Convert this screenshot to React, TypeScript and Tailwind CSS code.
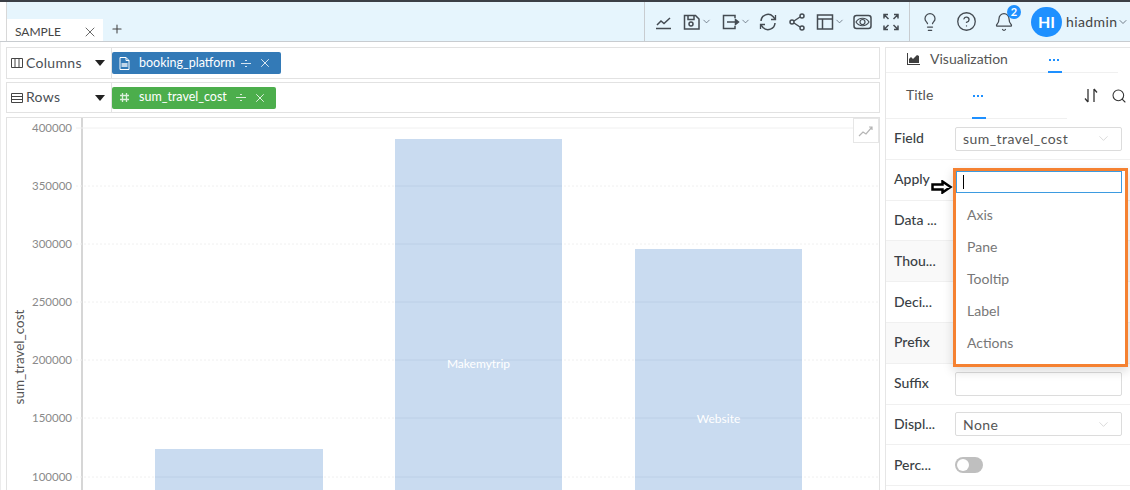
import React from "react";
import { ChevronDown, X, Plus, Search, Lightbulb, CircleHelp, Bell } from "lucide-react";

const F = "[font-family:Lato,'Open_Sans',sans-serif]";

const Chev = ({ c = "#4b5563", s = 11, cn = "" }: { c?: string; s?: number; cn?: string }) => (
  <ChevronDown size={s} color={c} strokeWidth={1.5} className={cn} />
);

const Tool = ({ children, w = 18, cn = "" }: { children: React.ReactNode; w?: number; cn?: string }) => (
  <svg width={w} height="18" viewBox={`0 0 ${w} 18`} fill="none" stroke="#444b52" strokeWidth="1.5" className={cn}>
    {children}
  </svg>
);

function Toolbar() {
  return (
    <div className="ml-auto flex h-full items-center">
      <div className="flex h-full items-center border-l border-[#c8ccd0] pl-[10px] pr-[10px]">
        <Tool>
          <path d="M1 15.500h15M2 12l4-4 3 2.500L15 5" />
        </Tool>
        <Tool cn="ml-[10px]">
          <path d="M1.500 2.500h11l3.500 3.500v10H1.500zM5 2.500v4h6v-4" />
          <circle cx="8" cy="11" r="2" />
        </Tool>
        <Chev />
        <Tool w={19} cn="ml-[10px]">
          <path d="M13 5V2.500H1.500v13H13V13M5 9h10" />
          <path d="M13.500 6.500l3 2.500-3 2.500z" fill="#444b52" />
        </Tool>
        <Chev cn="-ml-[1px]" />
        <Tool cn="ml-[8px]">
          <path d="M2 8a7 7 0 0 1 12-4.500L16 6M16 10a7 7 0 0 1-12 4.500L2 12" />
          <path d="M16.500 2v4.500H12M1.500 16v-4.500H6" strokeWidth="1.300" />
        </Tool>
        <Tool w={16} cn="ml-[12px]">
          <circle cx="3" cy="9" r="2" />
          <circle cx="13" cy="3" r="2" />
          <circle cx="13" cy="15" r="2" />
          <path d="M5 8l6-4M5 10l6 4" />
        </Tool>
        <Tool cn="ml-[11px]">
          <path d="M1.500 2h15v14h-15zM1.500 6h15M6.500 6v10" />
        </Tool>
        <Chev />
        <svg width="19" height="18" viewBox="0 0 19 18" fill="none" stroke="#444b52" strokeWidth="1.200" className="ml-[8px]">
          <rect x="1" y="2.500" width="17" height="13" rx="2.500" strokeWidth="1.500" />
          <path d="M3 9c3-5 10-5 13 0-3 5-10 5-13 0z" />
          <circle cx="9.500" cy="9" r="2.500" />
        </svg>
        <Tool w={16} cn="ml-[11px]">
          <path d="M1 5.500V1.500h4M11 1.500h4v4M1 12.500v4h4M15 12.500v4h-4M1.500 2l4 4M14.500 2l-4 4M1.500 16l4-4M14.500 16l-4-4" />
        </Tool>
      </div>
      <div className="flex h-full items-center border-l border-[#c8ccd0] pl-[10px] pr-[1px]">
        <Lightbulb size={20} color="#444b52" strokeWidth={1.5} />
        <CircleHelp size={21} color="#444b52" strokeWidth={1.5} className="ml-[16px]" />
        <div className="relative ml-[17px]">
          <Bell size={20} color="#444b52" strokeWidth={1.5} />
          <span className="absolute -right-[7px] -top-[7px] flex h-[14px] w-[14px] items-center justify-center rounded-full bg-[#1e90ff] text-[11px] font-bold leading-none text-white">
            2
          </span>
        </div>
        <div className="ml-[17px] flex h-[30px] w-[31px] items-center justify-center rounded-full bg-[#1e90ff] text-[16px] font-bold text-white">
          HI
        </div>
        <span className="ml-[4px] w-[51px] text-[14px] tracking-[0.4px] text-[#444]">hiadmin</span>
        <Chev s={12} />
      </div>
    </div>
  );
}

function Shelf({ icon, label, pillColor, pillIcon, text, h, tw }: { icon: React.ReactNode; label: string; pillColor: string; pillIcon: React.ReactNode; text: string; h: string; tw: string }) {
  return (
    <div className={`flex items-center border border-[#e2e2e2] ${h}`}>
      <div className="flex h-full w-[105px] shrink-0 items-center border-r border-[#e2e2e2] pl-[4px]">
        {icon}
        <span className="ml-[3px] -translate-y-[1.500px] text-[14px] tracking-[0.3px] text-[#4a4f55]">{label}</span>
        <span className="ml-auto mr-[6px] h-0 w-0 border-x-[5px] border-t-[6px] border-x-transparent border-t-[#222]" />
      </div>
      <div className={`flex h-[22px] items-center rounded-[2px] px-[7px] text-[12.500px] font-normal text-white ${pillColor}`}>
        {pillIcon}
        <span className={`ml-[9px] -translate-y-[0.500px] whitespace-nowrap ${tw}`}>{text}</span>
        <span className="ml-[7px] flex h-[12px] w-[10px] flex-col items-center justify-center gap-[2px]">
          <i className="h-[1px] w-[2px] bg-white/80" />
          <i className="h-[1px] w-[10px] bg-white/80" />
          <i className="h-[1px] w-[2px] bg-white/80" />
        </span>
        <X size={14} color="white" strokeWidth={1.4} className="ml-[7px] mr-[2px]" />
      </div>
    </div>
  );
}

function Chart() {
  const ticks = [
    [400000, 128],
    [350000, 186],
    [300000, 244],
    [250000, 302],
    [200000, 360],
    [150000, 418],
    [100000, 477],
  ];
  return (
    <div className="relative mt-[1px] h-[373px] overflow-hidden border-x border-t border-[#e2e2e2]">
      <svg width="873" height="373" viewBox="7 118 873 373" className="block">
        <rect x="81" y="118" width="2" height="373" fill="#d6d6d6" />
        {ticks.map(([v, y]) => (
          <g key={v}>
            <line x1="76" x2="880" y1={y} y2={y} stroke="#f0f0f0" strokeWidth="1" strokeDasharray={v === 400000 ? undefined : "2 2"} />
            <text x="72" y={y + 4} textAnchor="end" fontSize="11.500" fill="#8a8a8a" fontFamily="Lato, sans-serif">
              {v}
            </text>
          </g>
        ))}
        <text transform="translate(24 357) rotate(-90)" textAnchor="middle" fontSize="13.500" fill="#555" fontFamily="Lato, sans-serif">
          sum_travel_cost
        </text>
        <rect x="155" y="449" width="168" height="42" fill="#c9dbf0" />
        <rect x="395" y="139" width="167" height="352" fill="#c9dbf0" />
        <rect x="635" y="249" width="167" height="242" fill="#c9dbf0" />
        {ticks.slice(1).map(([v, y]) => (
          <g key={v}>
            <line x1="395" x2="562" y1={y} y2={y} stroke="#bccfe6" />
            {y > 249 && <line x1="635" x2="802" y1={y} y2={y} stroke="#bccfe6" />}
            {y > 449 && <line x1="155" x2="323" y1={y} y2={y} stroke="#bccfe6" />}
          </g>
        ))}
        <text x="478.500" y="368" textAnchor="middle" fontSize="12" fill="#fff" fontFamily="Lato, sans-serif">
          Makemytrip
        </text>
        <text x="718.500" y="423" textAnchor="middle" fontSize="12" fill="#fff" fontFamily="Lato, sans-serif">
          Website
        </text>
      </svg>
      <div className="absolute right-0 top-0 flex h-[25px] w-[26px] items-center justify-center border border-[#e6e6e6] bg-white">
        <svg width="16" height="12" viewBox="0 0 16 12" fill="none" stroke="#b5b5b5" strokeWidth="1.200">
          <path d="M1 11l4-4 3 2 6-7M11 2h3v3" />
        </svg>
      </div>
    </div>
  );
}

function Row({ label, children, shade }: { label: string; children?: React.ReactNode; shade?: boolean }) {
  return (
    <div className={`flex h-[40.800px] items-center border-b border-[#f0f0f0] pl-[8px] ${shade ? "bg-[#f9f9f9]" : ""}`}>
      <span className="w-[61px] shrink-0 -translate-y-[1px] text-[14px] font-medium text-[#3a3f45]">{label}</span>
      {children}
    </div>
  );
}

function Select({ value }: { value: string }) {
  return (
    <div className="flex h-[24px] w-[167px] items-center justify-between rounded-[2px] border border-[#dcdcdc] bg-white pl-[7px] pr-[10px] text-[14px] tracking-[0.45px] text-[#555]">
      <span>{value}</span>
      <ChevronDown size={15} color="#c4c4c4" strokeWidth={1} />
    </div>
  );
}

const Dots = ({ cn }: { cn: string }) => (
  <span className={`absolute flex gap-[2.500px] ${cn}`}>
    <i className="h-[1.500px] w-[1.500px] bg-[#1e90ff]" />
    <i className="h-[1.500px] w-[1.500px] bg-[#1e90ff]" />
    <i className="h-[1.500px] w-[1.500px] bg-[#1e90ff]" />
  </span>
);

function Panel() {
  return (
    <div className="relative ml-[5px] w-[245px] shrink-0 border-l border-t border-[#e6e6e6] bg-white">
      <div className="relative flex h-[25px] w-[232px] items-center border-b border-[#f0f0f0]">
        <svg width="13" height="12" viewBox="0 0 13 12" className="ml-[21px] -translate-y-[1px]" fill="#3f3f3f">
          <path d="M0 0h1v11h12v1H0zM2 10V6l2-2 2 2 2-2 2-2 2 1v7z" />
        </svg>
        <span className="ml-[10px] -translate-y-[2px] text-[14px] text-[#555]">Visualization</span>
        <span className="absolute bottom-[-1px] left-[162px] h-[2px] w-[14px] bg-[#1e90ff]" />
        <Dots cn="left-[163px] top-[11px]" />
      </div>
      <div className="relative flex h-[46px] items-center">
        <div className="absolute bottom-0 left-0 h-[1px] w-[181px] bg-[#f0f0f0]" />
        <span className="ml-[20px] -translate-y-[2px] text-[14px] text-[#555]">Title</span>
        <span className="absolute bottom-0 left-[86px] h-[2px] w-[14px] bg-[#1e90ff]" />
        <Dots cn="left-[87px] top-[22px]" />
        <svg width="14" height="15" viewBox="0 0 14 15" fill="none" stroke="#333" strokeWidth="1.300" className="absolute left-[198px] top-[15px]">
          <path d="M4 1v13M4 14L1 10.500M10 14V1M10 1l3 3.500" />
        </svg>
        <Search size={16} color="#333" strokeWidth={1.6} className="absolute left-[225px] top-[15px]" />
      </div>
      <Row label="Field">
        <Select value="sum_travel_cost" />
      </Row>
      <Row label="Apply" />
      <Row label="Data ..." />
      <Row label="Thou..." shade />
      <Row label="Deci..." />
      <Row label="Prefix" shade />
      <Row label="Suffix">
        <div className="h-[24px] w-[167px] rounded-[2px] border border-[#dcdcdc] bg-white" />
      </Row>
      <Row label="Displ...">
        <Select value="None" />
      </Row>
      <Row label="Perc...">
        <div className="flex h-[16px] w-[28px] items-center rounded-full bg-[#bfbfbf] pl-[2px]">
          <span className="h-[12px] w-[12px] rounded-full bg-white" />
        </div>
      </Row>

      <svg width="22" height="14" viewBox="0 0 22 14" className="absolute left-[45px] top-[132px]" fill="white" stroke="black" strokeWidth="2.500">
        <path d="M1.500 4.500h10V1.500l8 5.500-8 5.500v-3h-10z" />
      </svg>

      <div className="absolute left-[67px] top-[120px] z-10 h-[199px] w-[175px] border-[3px] border-[#f58131] bg-white shadow-[0_4px_10px_rgba(0,0,0,0.15)]">
        <div className="flex h-[22px] w-[166px] items-center border border-[#3d9be0] bg-white pl-[6px]">
          <span className="h-[14px] w-[1px] bg-black" />
        </div>
        <div className="pt-[5px] text-[14px] text-[#777]">
          {["Axis", "Pane", "Tooltip", "Label", "Actions"].map((t) => (
            <div key={t} className="flex h-[32px] items-center pl-[11px]">
              {t}
            </div>
          ))}
        </div>
      </div>
    </div>
  );
}

export default function App() {
  return (
    <div className={`h-[490px] w-[1130px] overflow-hidden bg-white ${F}`}>
      <div className="h-[2px] bg-[#3b3f46]" />
      <div className="h-[40px] border-b border-[#c8ccd0] pl-[6px]">
        <div className="flex h-full items-stretch border-l border-[#d8d8d8] bg-[#e6f5fd]">
          <div className="mt-[17px] flex h-[22px] w-[96px] items-center bg-white pl-[8px] pr-[5px] pt-[3px] text-[12px] text-[#444]">
            SAMPLE
            <X size={16} color="#444" strokeWidth={1.2} className="ml-auto" />
          </div>
          <Plus size={14} color="#444" strokeWidth={1.8} className="ml-[7px] mt-[20px]" />
          <Toolbar />
        </div>
      </div>
      <div className="flex border-l border-[#ececec] pl-[5px] pt-[5px]">
        <div className="flex w-[874px] shrink-0 flex-col gap-[3px]">
          <Shelf
            h="h-[32px]"
            label="Columns"
            text="booking_platform"
            tw="w-[95px]"
            pillColor="bg-[#337ab7]"
            icon={
              <svg width="12" height="12" viewBox="0 0 12 12" fill="none" stroke="#444" strokeWidth="1">
                <path d="M.5 1.500h11v9H.5zM4 1.500v9M8 1.500v9" />
              </svg>
            }
            pillIcon={
              <svg width="11" height="13" viewBox="0 0 11 13" fill="none" stroke="white" strokeWidth="1">
                <path d="M1 .5h6l3 3v9H1zM7 .5v3h3" />
                <rect x="2.500" y="6" width="6" height="4" fill="white" opacity=".7" stroke="none" />
              </svg>
            }
          />
          <Shelf
            h="h-[31px]"
            label="Rows"
            text="sum_travel_cost"
            tw="w-[90px]"
            pillColor="bg-[#4cae4c]"
            icon={
              <svg width="12" height="12" viewBox="0 0 12 12" fill="none" stroke="#444" strokeWidth="1">
                <path d="M.5 1.500h11v9H.5zM.5 4.500h11M.5 7.500h11" />
              </svg>
            }
            pillIcon={
              <svg width="11" height="11" viewBox="0 0 11 11" fill="none" stroke="white" strokeOpacity=".8" strokeWidth="1.300">
                <path d="M3.500 1v9M7.500 1v9M1 3.500h9M1 7.500h9" />
              </svg>
            }
          />
          <Chart />
        </div>
        <Panel />
      </div>
    </div>
  );
}
